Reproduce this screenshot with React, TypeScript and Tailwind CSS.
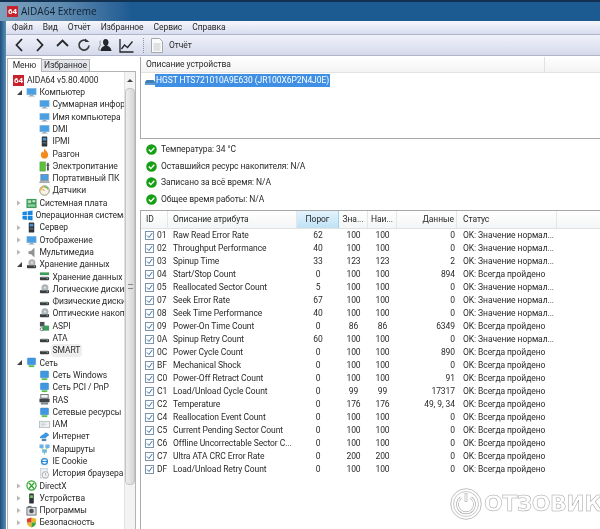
import React from "react";

type IconName =
  | "aida" | "monitor" | "server" | "flame" | "battery" | "laptop" | "gauge" | "board" | "windows"
  | "speaker" | "disc" | "hdd" | "storage" | "aspi" | "net" | "ras" | "iam" | "globe" | "routes"
  | "ie" | "history" | "xbox" | "device" | "apps" | "shield";

const tree: { label: string; level: number; icon: IconName; arrow?: "open" | "closed"; selected?: boolean }[] = [
  { label: "AIDA64 v5.80.4000", level: 0, icon: "aida" },
  { label: "Компьютер", level: 1, icon: "monitor", arrow: "open" },
  { label: "Суммарная информация", level: 2, icon: "monitor" },
  { label: "Имя компьютера", level: 2, icon: "monitor" },
  { label: "DMI", level: 2, icon: "monitor" },
  { label: "IPMI", level: 2, icon: "server" },
  { label: "Разгон", level: 2, icon: "flame" },
  { label: "Электропитание", level: 2, icon: "battery" },
  { label: "Портативный ПК", level: 2, icon: "laptop" },
  { label: "Датчики", level: 2, icon: "gauge" },
  { label: "Системная плата", level: 1, icon: "board", arrow: "closed" },
  { label: "Операционная система", level: 1, icon: "windows", arrow: "closed" },
  { label: "Сервер", level: 1, icon: "server", arrow: "closed" },
  { label: "Отображение", level: 1, icon: "monitor", arrow: "closed" },
  { label: "Мультимедиа", level: 1, icon: "speaker", arrow: "closed" },
  { label: "Хранение данных", level: 1, icon: "disc", arrow: "open" },
  { label: "Хранение данных Windows", level: 2, icon: "storage" },
  { label: "Логические диски", level: 2, icon: "disc" },
  { label: "Физические диски", level: 2, icon: "hdd" },
  { label: "Оптические накопители", level: 2, icon: "disc" },
  { label: "ASPI", level: 2, icon: "aspi" },
  { label: "ATA", level: 2, icon: "hdd" },
  { label: "SMART", level: 2, icon: "hdd", selected: true },
  { label: "Сеть", level: 1, icon: "net", arrow: "open" },
  { label: "Сеть Windows", level: 2, icon: "net" },
  { label: "Сеть PCI / PnP", level: 2, icon: "net" },
  { label: "RAS", level: 2, icon: "ras" },
  { label: "Сетевые ресурсы", level: 2, icon: "net" },
  { label: "IAM", level: 2, icon: "iam" },
  { label: "Интернет", level: 2, icon: "globe" },
  { label: "Маршруты", level: 2, icon: "routes" },
  { label: "IE Cookie", level: 2, icon: "ie" },
  { label: "История браузера", level: 2, icon: "history" },
  { label: "DirectX", level: 1, icon: "xbox", arrow: "closed" },
  { label: "Устройства", level: 1, icon: "device", arrow: "closed" },
  { label: "Программы", level: 1, icon: "apps", arrow: "closed" },
  { label: "Безопасность", level: 1, icon: "shield", arrow: "closed" },
];

const normal = "OK: Значение нормал...";
const passed = "OK: Всегда пройдено";

const rows = [
  ["01", "Raw Read Error Rate", "62", "100", "100", "0", normal],
  ["02", "Throughput Performance", "40", "100", "100", "0", normal],
  ["03", "Spinup Time", "33", "123", "123", "2", normal],
  ["04", "Start/Stop Count", "0", "100", "100", "894", passed],
  ["05", "Reallocated Sector Count", "5", "100", "100", "0", normal],
  ["07", "Seek Error Rate", "67", "100", "100", "0", normal],
  ["08", "Seek Time Performance", "40", "100", "100", "0", normal],
  ["09", "Power-On Time Count", "0", "86", "86", "6349", passed],
  ["0A", "Spinup Retry Count", "60", "100", "100", "0", normal],
  ["0C", "Power Cycle Count", "0", "100", "100", "890", passed],
  ["BF", "Mechanical Shock", "0", "100", "100", "0", passed],
  ["C0", "Power-Off Retract Count", "0", "100", "100", "91", passed],
  ["C1", "Load/Unload Cycle Count", "0", "99", "99", "17317", passed],
  ["C2", "Temperature", "0", "176", "176", "49, 9, 34", passed],
  ["C4", "Reallocation Event Count", "0", "100", "100", "0", passed],
  ["C5", "Current Pending Sector Count", "0", "100", "100", "0", passed],
  ["C6", "Offline Uncorrectable Sector C...", "0", "100", "100", "0", passed],
  ["C7", "Ultra ATA CRC Error Rate", "0", "200", "200", "0", passed],
  ["DF", "Load/Unload Retry Count", "0", "100", "100", "0", passed],
];

const health = [
  "Температура: 34 °C",
  "Оставшийся ресурс накопителя: N/A",
  "Записано за всё время: N/A",
  "Общее время работы: N/A",
];

function TreeIcon({ name }: { name: IconName }) {
  const screen = (
    <>
      <rect x="1" y="1.500" width="10" height="7" fill="#4a9fe2" stroke="#7fb4dc" strokeWidth="0.6" />
      <rect x="4" y="8.500" width="4" height="1.500" fill="#9aa7b2" />
      <rect x="2.500" y="10" width="7" height="1" fill="#c3ccd4" />
    </>
  );
  const drive = (
    <>
      <rect x="1" y="6.500" width="10" height="3.500" rx="1" fill="#3c3f42" />
      <rect x="2" y="6" width="8" height="1" fill="#b9bdc1" />
      <rect x="8.500" y="8" width="1.300" height="0.800" fill="#8fd18f" />
    </>
  );
  const shapes: Record<IconName, React.ReactNode> = {
    aida: null,
    monitor: screen,
    server: (
      <>
        <rect x="3" y="0.500" width="6" height="11" rx="0.700" fill="#2e3338" />
        <rect x="4" y="2" width="4" height="3" fill="#4a8fd0" />
        <rect x="4" y="7" width="4" height="1" fill="#7d858c" />
      </>
    ),
    flame: (
      <path d="M6 0.500c1 2.500 4 3.500 4 7 0 2.500-2 4-4 4s-4-1.500-4-4c0-2 1-3 1.700-4 .3 1 .7 1.500 1.300 1.800C5.300 3.500 5.300 2 6 .5z" fill="#f28a1e" />
    ),
    battery: (
      <>
        <rect x="1" y="1" width="6" height="10" fill="#5cc23c" stroke="#3d8f2a" strokeWidth="0.5" />
        <rect x="9" y="2" width="1.500" height="8" fill="#34383c" />
        <path d="M7.500 4.500h4M9.700 7v4" stroke="#34383c" strokeWidth="0.8" />
      </>
    ),
    laptop: (
      <>
        <rect x="2" y="1.500" width="8" height="6.500" fill="#4a9fe2" stroke="#6b7680" strokeWidth="0.7" />
        <path d="M0.500 10.500l1.500-2.500h8l1.500 2.500z" fill="#aab2ba" stroke="#6b7680" strokeWidth="0.4" />
      </>
    ),
    gauge: (
      <>
        <circle cx="6" cy="6" r="5.200" fill="#f7f3e6" stroke="#7c8468" strokeWidth="0.9" />
        <path d="M2 6a4 4 0 0 1 3-3.800" stroke="#e9b21c" strokeWidth="1.300" fill="none" />
        <path d="M5.500 2.100a4 4 0 0 1 4.300 2.500" stroke="#5fb23c" strokeWidth="1.300" fill="none" />
        <path d="M6 6.500l-1.800-2" stroke="#d33" strokeWidth="0.8" />
      </>
    ),
    board: (
      <>
        <rect x="0.500" y="1" width="11" height="10" fill="#3f9d5c" />
        <rect x="2" y="2.500" width="3.500" height="3" fill="#b8e0c0" />
        <rect x="7" y="2.500" width="3" height="2" fill="#d6efdb" />
        <rect x="2" y="7" width="8" height="2.500" fill="#8fcf9f" />
      </>
    ),
    windows: (
      <path d="M0.500 2.200l4.800-.8v4.300H.5zM6.200 1.300L11.500 .5v5.200H6.200zM.5 6.500h4.800v4.300l-4.800-.8zM6.200 6.500h5.300v5l-5.300-.8z" fill="#1a86dd" />
    ),
    speaker: <path d="M3 4.500h2.500L9 1v10L5.500 7.500H3z" fill="#8f9497" stroke="#777" strokeWidth="0.3" />,
    disc: (
      <>
        <circle cx="6.500" cy="4" r="3.500" fill="#b3b8bc" stroke="#8a9095" strokeWidth="0.4" />
        <circle cx="6.500" cy="4" r="1" fill="#eee" />
        {drive}
      </>
    ),
    hdd: drive,
    storage: (
      <>
        <rect x="1" y="1.500" width="10" height="3" fill="#3f9d5c" />
        {drive}
      </>
    ),
    aspi: (
      <>
        <rect x="1" y="1" width="5" height="5" fill="#4c5257" />
        <rect x="4" y="5" width="7" height="5.500" fill="#3f9d5c" />
        <circle cx="3" cy="9" r="1.700" fill="none" stroke="#555" strokeWidth="0.8" />
      </>
    ),
    net: (
      <>
        <rect x="1.500" y="1" width="9" height="7.500" rx="1" fill="#3e97e0" stroke="#2c78bd" strokeWidth="0.4" />
        <rect x="3" y="9" width="6" height="2" fill="#5bc14a" />
      </>
    ),
    ras: (
      <>
        <rect x="2" y="0.500" width="8" height="4" fill="#f2f2f2" stroke="#50565c" strokeWidth="0.8" />
        <rect x="0.500" y="5" width="11" height="4" fill="#3e4348" />
        <rect x="2" y="9" width="8" height="2.500" fill="#7f868c" />
      </>
    ),
    iam: (
      <>
        <rect x="0.500" y="2.500" width="11" height="7" fill="#eef0f2" stroke="#a4aab0" strokeWidth="0.7" />
        <path d="M2 4.500h5M2 6h6M2 7.500h4" stroke="#b8bec4" strokeWidth="0.6" />
      </>
    ),
    globe: (
      <>
        <path d="M1 6.500c2-3 5-3 6-5 2 0 4 1.500 4 3.500-2 .5-2.500 2-4 3H3c-1.500 0-2.500-.5-2-1.500z" fill="#3e97e0" />
        <rect x="3" y="8.500" width="5" height="2.500" fill="#5a86a8" />
      </>
    ),
    routes: (
      <>
        <rect x="0.500" y="0.500" width="4.500" height="4" fill="#6cb1e8" />
        <rect x="7" y="0.500" width="4.500" height="4" fill="#6cb1e8" />
        <rect x="3.500" y="6" width="5" height="3.500" fill="#6cb1e8" />
        <path d="M6 9.500v2M2.500 4.500L5 6M9.500 4.500L7 6" stroke="#5bc14a" strokeWidth="0.8" />
      </>
    ),
    ie: (
      <>
        <rect x="1.500" y="0.500" width="8.500" height="11" fill="#f3f5f7" />
        <circle cx="6" cy="6" r="3.200" fill="none" stroke="#2a8ad6" strokeWidth="1.400" />
        <path d="M3 6h6" stroke="#2a8ad6" strokeWidth="1.100" />
      </>
    ),
    history: (
      <>
        <rect x="1.500" y="0.500" width="7.500" height="10.500" fill="#eceef0" stroke="#b0b5ba" strokeWidth="0.5" />
        <circle cx="7" cy="7.500" r="3.500" fill="#f5f5f5" stroke="#8a9095" strokeWidth="0.7" />
        <path d="M7 5.500v2l1.300 1" stroke="#70767c" strokeWidth="0.6" fill="none" />
      </>
    ),
    xbox: (
      <>
        <circle cx="6" cy="6" r="5" fill="#fff" stroke="#2ea52e" strokeWidth="1.300" />
        <path d="M3 3l6 6.500M9 3L3 9.500" stroke="#2ea52e" strokeWidth="1.400" />
      </>
    ),
    device: (
      <>
        <rect x="3.500" y="0.500" width="5" height="11" rx="0.500" fill="#2e3338" />
        <rect x="4.500" y="2.500" width="3" height="3" fill="#6fce5a" />
      </>
    ),
    apps: (
      <>
        <rect x="1" y="2.500" width="10" height="8.500" fill="#d9dcde" stroke="#4c5257" strokeWidth="0.8" />
        <circle cx="6" cy="6.500" r="2.500" fill="#4c5257" />
        <rect x="2" y="1" width="4" height="1.500" fill="#777" />
      </>
    ),
    shield: (
      <>
        <path d="M6 .5l5 1.500v4H6zM1 6h5v5.500C3.500 10.800 1 9 1 6z" fill="#e8b923" />
        <path d="M6 .5V6H1V2z" fill="#d9412e" />
        <path d="M6 6h5c0 3-2.500 4.800-5 5.500z" fill="#3fa53f" />
      </>
    ),
  };

  if (name === "aida") return <Logo />;
  return (
    <svg viewBox="0 0 12 12" className="w-[11px] h-[11px] shrink-0">
      {shapes[name]}
    </svg>
  );
}

function Logo() {
  return (
    <div className="w-[11px] h-[11px] shrink-0 bg-[#c8232c] text-white text-[8px] leading-[11px] text-center font-bold">
      64
    </div>
  );
}

function CheckIcon() {
  return (
    <svg viewBox="0 0 11 11" className="w-[11px] h-[11px] shrink-0">
      <circle cx="5.500" cy="5.500" r="5.300" fill="#17a015" />
      <path d="M2.800 5.600l2 2 3.500-3.800" stroke="#fff" strokeWidth="1.400" fill="none" />
    </svg>
  );
}

function RowCheck() {
  return (
    <svg viewBox="0 0 9 9" className="w-[9px] h-[9px] shrink-0">
      <rect x="0.500" y="0.500" width="8" height="8" fill="#fbfdff" stroke="#7f93a8" />
      <path d="M2 4.500l2 2 3.200-4.500" stroke="#3a6fa8" strokeWidth="1" fill="none" />
    </svg>
  );
}

function HeaderCell({ text, className }: { text: string; className: string }) {
  return <div className={"h-full flex items-center border-r border-[#e4e7ea] " + className}>{text}</div>;
}

export default function App() {
  return (
    <div className="relative w-[600px] h-[529px] overflow-hidden bg-[#1c5a92] text-[8.5px] tracking-[-0.07px] text-[#2a2a2a] font-['Roboto',sans-serif] blur-[0.3px]">
      {/* Title bar */}
      <div className="h-[21px] flex items-center pl-[7px] gap-[3px] border-t-2 border-[#12304f] bg-gradient-to-r from-[#7da0bd] via-[#5f8bb0] via-[10%] to-[#1c5a92] to-[22%]">
        <Logo />
        <span className="text-[10px] tracking-normal text-[#10202e] font-['Open_Sans',sans-serif]">AIDA64 Extreme</span>
      </div>

      <div className="flex h-[508px]">
        <div className="w-[6px] bg-gradient-to-r from-[#1c4f80] to-[#5b8fb5]" />
        <div className="flex-1 min-w-0 bg-white flex flex-col">
          {/* Menu */}
          <div className="h-[14px] flex items-center pl-[6px] gap-[10px] shrink-0 border-b border-[#b0b4c8] bg-gradient-to-b from-[#f6f7fc] to-[#d8ddef]">
            {["Файл", "Вид", "Отчёт", "Избранное", "Сервис", "Справка"].map((item) => (
              <span key={item}>{item}</span>
            ))}
          </div>

          {/* Toolbar */}
          <div className="h-[21px] flex items-center pl-[9px] shrink-0 border-b border-[#b0b4c8] bg-gradient-to-b from-[#f0f2fa] to-[#d5daeb]">
            <svg viewBox="0 0 8 14" className="w-[8px] h-[14px]">
              <path d="M7 1L1.500 7 7 13" fill="none" stroke="#23272b" strokeWidth="1.800" />
            </svg>
            <svg viewBox="0 0 8 14" className="w-[8px] h-[14px] ml-[13px]">
              <path d="M1 1l5.500 6L1 13" fill="none" stroke="#23272b" strokeWidth="1.800" />
            </svg>
            <svg viewBox="0 0 13 8" className="w-[13px] h-[8px] ml-[12px] -mt-[5px]">
              <path d="M1 7l5.500-5.500L12 7" fill="none" stroke="#23272b" strokeWidth="1.800" />
            </svg>
            <svg viewBox="0 0 13 14" className="w-[13px] h-[14px] ml-[8px]">
              <path d="M10.500 3.500a5 5 0 1 0 1.500 4" fill="none" stroke="#3a3e42" strokeWidth="1.700" />
              <path d="M8 .5l4.500 3.500H8z" fill="#3a3e42" />
            </svg>
            <svg viewBox="0 0 14 14" className="w-[14px] h-[14px] ml-[8px]">
              <path d="M7.500 1c2 0 3 1.500 3 3.500 0 1.500-.7 2.700-1.500 3.300 2 .7 4 1.700 4.500 5.200H2.500c.5-3.500 2.500-4.500 4.500-5.200C6.200 7.200 5 6 5 4.500 5 2.500 5.800 1 7.500 1z" fill="#23272b" />
              <path d="M3 2.500C1.800 3 1.500 5 2.500 7 1.500 8 .7 10 .5 12H2" fill="none" stroke="#8c9096" strokeWidth="1" />
            </svg>
            <svg viewBox="0 0 15 15" className="w-[15px] h-[15px] ml-[7px]">
              <path d="M1 1v13h13.500" fill="none" stroke="#23272b" strokeWidth="1.300" />
              <path d="M2.500 11l3-4 3 2.500 5-6" fill="none" stroke="#23272b" strokeWidth="1.300" />
            </svg>
            <div className="h-[15px] ml-[9px] border-l border-dotted border-[#8c90a0]" />
            <svg viewBox="0 0 12 15" className="w-[12px] h-[15px] ml-[7px]">
              <path d="M.5.5h8l3 3v11H.5z" fill="#fbfbfb" stroke="#a4a8ac" />
              <path d="M2.500 6h7M2.500 8h7M2.500 10h7M2.500 12h7" stroke="#c2c6ca" />
            </svg>
            <span className="ml-[6px]">Отчёт</span>
          </div>

          <div className="flex-1 min-h-0 flex">
            {/* Left column: tabs and tree */}
            <div className="w-[130px] shrink-0 flex flex-col pl-[1px] pt-[1px]">
              <div className="h-[14px] flex items-end shrink-0">
                <div className="h-[14px] w-[35px] flex items-center justify-center bg-white border border-b-0 border-[#b4b4b4] -mb-px relative">
                  Меню
                </div>
                <div className="h-[12px] w-[48px] flex items-center justify-center bg-[#e4e6ec] border border-b-0 border-l-0 border-[#b4b4b4]">
                  Избранное
                </div>
              </div>
              <div className="flex-1 min-h-0 flex border-t border-x border-[#b4b4b4]">
                <div className="flex-1 min-w-0 overflow-hidden pt-[2px]">
                  {tree.map((node) => (
                    <div key={node.label} className="h-[12.310px] flex items-center whitespace-nowrap">
                      <div className={node.level === 0 ? "w-[5px] shrink-0" : node.level === 1 ? "w-[17.500px] shrink-0" : "w-[30.500px] shrink-0"} />
                      {node.arrow === "open" && <div className="w-0 h-0 -ml-[9px] mr-[4px] border-b-[5px] border-l-[5px] border-l-transparent border-b-[#404040]" />}
                      {node.arrow === "closed" && <div className="w-[4px] h-[6px] -ml-[9px] mr-[5px] [clip-path:polygon(0_0,100%_50%,0_100%)] bg-[#b8b8b8]" />}
                      <TreeIcon name={node.icon} />
                      <span className={node.selected ? "ml-px px-[2px] bg-[#eeeeee] rounded-sm" : "ml-[3px]"}>{node.label}</span>
                    </div>
                  ))}
                </div>
                {/* Scrollbar */}
                <div className="w-[11px] shrink-0 flex flex-col items-center bg-[#f3f3f3] border-l border-[#e2e2e2]">
                  <div className="h-[16px] flex items-center justify-center">
                    <div className="w-0 h-0 border-x-[3px] border-b-[3px] border-x-transparent border-b-[#444]" />
                  </div>
                  <div className="w-full h-[397px] flex items-center justify-center bg-gradient-to-r from-[#eeeeee] to-[#d6d6d6] border border-[#c4c4c4] rounded-sm">
                    <div className="w-[5px] h-[5px] border-y border-[#888]" />
                  </div>
                </div>
              </div>
            </div>

            {/* Right column */}
            <div className="flex-1 min-w-0 flex flex-col ml-[4px]">
              <div className="h-[82px] shrink-0 flex flex-col border-l border-b border-[#a8a8a8] mt-px">
                <div className="h-[16px] shrink-0 flex">
                  <div className="w-[404px] flex items-center pl-[5px] border-r border-b border-[#e2e2e2] bg-gradient-to-b from-white to-[#f3f3f3]">
                    Описание устройства
                  </div>
                  <div className="flex-1 border-b border-[#e2e2e2] bg-gradient-to-b from-white to-[#f3f3f3]" />
                </div>
                <div className="flex items-center pl-[4px] h-[13px] mt-[1px]">
                  <svg viewBox="0 0 10 6" className="w-[10px] h-[6px] shrink-0 mt-[3px]">
                    <path d="M0 5V3.500C0 2.500 1 1 2 1h6c1 0 2 1.500 2 2.500V5z" fill="#3f7fb8" />
                    <rect y="4" width="10" height="2" fill="#5b9bd1" />
                  </svg>
                  <span className="px-[1px] h-[13px] flex items-center bg-[#3f90e4] text-white whitespace-nowrap">
                    HGST HTS721010A9E630 (JR100X6P2N4J0E)
                  </span>
                </div>
              </div>

              <div className="h-[71px] shrink-0 pl-[6px] pt-[2.500px]">
                {health.map((line) => (
                  <div key={line} className="h-[16.500px] flex items-center gap-[4px]">
                    <CheckIcon />
                    <span>{line}</span>
                  </div>
                ))}
              </div>

              {/* SMART table */}
              <div className="flex-1 min-h-0 border-l border-t border-[#a8a8a8]">
                <div className="h-[18px] flex border-b border-[#e2e2e2] bg-gradient-to-b from-white to-[#f4f5f6]">
                  <HeaderCell text="ID" className="w-[27px] pl-[5px]" />
                  <HeaderCell text="Описание атрибута" className="w-[129px] pl-[5px]" />
                  <HeaderCell text="Порог" className="w-[42px] justify-center bg-gradient-to-b from-[#e4f3fc] to-[#bfe2f6] border-x-[#9fd0ec]" />
                  <HeaderCell text="Зна..." className="w-[29px] justify-center" />
                  <HeaderCell text="Наи..." className="w-[29px] justify-center" />
                  <HeaderCell text="Данные" className="w-[60px] justify-end pr-[2px]" />
                  <HeaderCell text="Статус" className="w-[100px] pl-[6px]" />
                </div>
                {rows.map((row) => (
                  <div key={row[0]} className="h-[13px] flex items-center whitespace-nowrap">
                    <div className="w-[27px] flex items-center pl-[4px] gap-[3px]">
                      <RowCheck />
                      <span>{row[0]}</span>
                    </div>
                    <div className="w-[129px] pl-[5px]">{row[1]}</div>
                    <div className="w-[42px] text-center">{row[2]}</div>
                    <div className="w-[29px] text-center">{row[3]}</div>
                    <div className="w-[29px] text-center">{row[4]}</div>
                    <div className="w-[60px] text-right pr-[2px]">{row[5]}</div>
                    <div className="pl-[6px]">{row[6]}</div>
                  </div>
                ))}
              </div>
            </div>
          </div>
        </div>
      </div>

      {/* Site watermark */}
      <div className="absolute left-[450px] top-[488px] flex items-center gap-[2px]">
        <svg viewBox="0 0 32 32" className="w-[32px] h-[32px]">
          <circle cx="16" cy="16" r="15.300" fill="none" stroke="#a4a4a4" strokeWidth="0.700" />
          <circle cx="16" cy="16" r="12.500" fill="none" stroke="#a4a4a4" strokeWidth="0.600" />
          <path d="M11 9.500a8.500 8.500 0 1 0 10 0" fill="none" stroke="#a4a4a4" strokeWidth="2.600" />
          <path d="M11 9.500a8.500 8.500 0 1 0 10 0" fill="none" stroke="#ffffff" strokeWidth="1.400" />
          <path d="M16 5v9" stroke="#a4a4a4" strokeWidth="2.600" />
          <path d="M16 5.500v8" stroke="#ffffff" strokeWidth="1.400" />
        </svg>
        <span className="text-[22px] leading-none font-bold text-white tracking-[-0.5px] font-['DejaVu_Sans',sans-serif] [-webkit-text-stroke:0.5px_#a4a4a4]">
          ОТЗОВИК
        </span>
      </div>
    </div>
  );
}
